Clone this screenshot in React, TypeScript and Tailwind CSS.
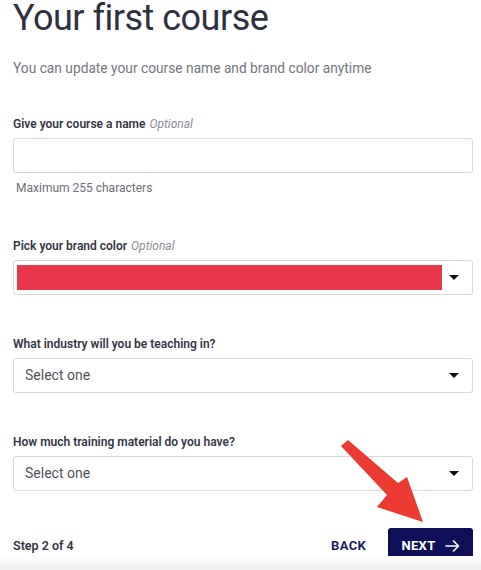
import React from 'react';

const Caret = () => (
  <svg width="10" height="6" viewBox="0 0 10 6" className="shrink-0">
    <path d="M0 0 L10 0 L5 5 Z" fill="#111" />
  </svg>
);

const Label = ({ text, optional }: { text: string; optional?: boolean }) => (
  <p className="text-[12px] font-semibold text-[#333645] leading-[12px] mb-[8px]">
    {text}
    {optional && <span className="ml-1 font-normal italic text-[#8a8d96]">Optional</span>}
  </p>
);

const SelectBox = () => (
  <div className="h-[35px] border border-[#d8d9dc] rounded-[3px] flex items-center justify-between pl-[11px] pr-[13px]">
    <span className="text-[14px] text-[#50535d]">Select one</span>
    <Caret />
  </div>
);

export default function App() {
  return (
    <div className="w-[481px] h-[570px] bg-white relative overflow-hidden font-['Roboto',sans-serif]">
      <div className="pl-[13px] pr-[8px]">
        <h1 className="text-[36px] leading-[36px] tracking-[-0.5px] text-[#2e3040]">Your first course</h1>
        <p className="text-[13.75px] leading-[20px] text-[#74767e] mt-[22px]">You can update your course name and brand color anytime</p>

        <div className="mt-[40px]">
          <Label text="Give your course a name" optional />
          <div className="h-[35px] border border-[#d8d9dc] rounded-[3px]" />
          <p className="text-[12px] leading-[16px] text-[#6e7079] mt-[7px] ml-[3px]">Maximum 255 characters</p>
        </div>

        <div className="mt-[44px]">
          <Label text="Pick your brand color" optional />
          <div className="h-[35px] border border-[#d8d9dc] rounded-[3px] flex items-center pl-[3px] pr-[13px] gap-[7px]">
            <div className="h-[25px] flex-1 bg-[#e8364b]" />
            <Caret />
          </div>
        </div>

        <div className="mt-[43px]">
          <Label text="What industry will you be teaching in?" />
          <SelectBox />
        </div>

        <div className="mt-[43px]">
          <Label text="How much training material do you have?" />
          <SelectBox />
        </div>

        <div className="mt-[37px] flex items-center justify-between">
          <span className="text-[12.5px] font-semibold text-[#333645]">Step 2 of 4</span>
          <div className="flex items-center gap-[22px]">
            <button className="text-[13px] font-bold text-[#1b1d5e] tracking-[0.3px]">BACK</button>
            <button className="h-[36px] w-[85px] bg-[#0e0f58] rounded-[3px] flex items-center justify-center gap-[9px] text-white text-[13px] font-bold tracking-[0.3px]">
              NEXT
              <svg width="15" height="12" viewBox="0 0 15 12" fill="none" stroke="white" strokeWidth="1.6" strokeLinecap="round" strokeLinejoin="round">
                <path d="M1 6 H13.5 M8.5 1 L13.5 6 L8.5 11" />
              </svg>
            </button>
          </div>
        </div>
      </div>

      <div className="absolute left-0 right-0 bottom-0 h-[14px] bg-gradient-to-b from-white to-[#eeeeee] pointer-events-none" />

      <svg className="absolute left-0 top-0 pointer-events-none" width="481" height="570" viewBox="0 0 481 570">
        <polygon
          points="341,446 348,440 398,483 407,477 423,522 377,507 387,495"
          fill="#eb3a2f"
        />
      </svg>
    </div>
  );
}
